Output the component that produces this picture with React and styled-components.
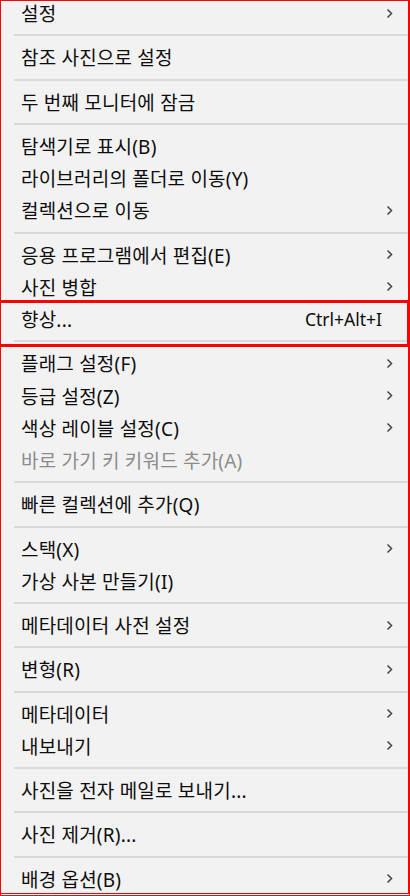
import React from 'react';
import styled, { createGlobalStyle } from 'styled-components';

const Global = createGlobalStyle`
  html, body { margin: 0; padding: 0; background: #ffffff; }
  body { font-family: "Noto Sans", "Noto Sans CJK KR", sans-serif; }
  #root { width: 410px; height: 896px; }
`;

const Frame = styled.div`
  box-sizing: border-box;
  width: 410px;
  height: 896px;
  overflow: hidden;
  background: #f2f2f2;
  background-clip: padding-box;
  border-left: 1px solid #ff0000;
  border-top: 1px solid #ff0000;
  border-right: 2px solid #ff0000;
  border-bottom: 3px double #ff0000;
`;

const List = styled.div`
  display: flex;
  flex-direction: column;
  margin-top: -4px;
`;

const Row = styled.div`
  display: flex;
  align-items: center;
  height: 32.25px;
  flex: 0 0 auto;
  padding-left: 20px;
  font-size: 19px;
  color: ${(p) => (p.$disabled ? '#8c8c8c' : '#0d0d0d')};
  white-space: nowrap;
`;

const Label = styled.span`
  flex: 1 1 auto;
  letter-spacing: 0.2px;
`;

const Shortcut = styled.span`
  flex: 0 0 auto;
  font-family: "Noto Sans", sans-serif;
  font-size: 17.5px;
`;

const ArrowCell = styled.span`
  flex: 0 0 26px;
  display: flex;
  align-items: center;
  padding-left: 4px;
  box-sizing: border-box;
`;

const Separator = styled.div`
  flex: 0 0 12px;
  display: flex;
  align-items: center;
  padding-left: 13px;
  &::before {
    content: '';
    display: block;
    flex: 1;
    height: 2px;
    background: #dadada;
  }
`;

const Highlight = styled.div`
  position: relative;
  display: flex;
  flex-direction: column;
  &::after {
    content: '';
    position: absolute;
    top: -3px;
    bottom: 0;
    left: -1px;
    right: -2px;
    border: 3px solid #ff0000;
    border-left-width: 1px;
    pointer-events: none;
  }
`;

const Chevron = () => (
  <svg width="7" height="11" viewBox="0 0 7 11">
    <path d="M1.5 1.5 L5.5 5.5 L1.5 9.5" fill="none" stroke="#4a4a4a" strokeWidth="1.6" />
  </svg>
);

const items = [
  { label: '설정', sub: true },
  'sep',
  { label: '참조 사진으로 설정' },
  'sep',
  { label: '두 번째 모니터에 잠금' },
  'sep',
  { label: '탐색기로 표시(B)' },
  { label: '라이브러리의 폴더로 이동(Y)' },
  { label: '컬렉션으로 이동', sub: true },
  'sep',
  { label: '응용 프로그램에서 편집(E)', sub: true },
  { label: '사진 병합', sub: true },
  { label: '향상...', shortcut: 'Ctrl+Alt+I', highlight: true },
  { label: '플래그 설정(F)', sub: true },
  { label: '등급 설정(Z)', sub: true },
  { label: '색상 레이블 설정(C)', sub: true },
  { label: '바로 가기 키 키워드 추가(A)', disabled: true },
  'sep',
  { label: '빠른 컬렉션에 추가(Q)' },
  'sep',
  { label: '스택(X)', sub: true },
  { label: '가상 사본 만들기(I)' },
  'sep',
  { label: '메타데이터 사전 설정', sub: true },
  'sep',
  { label: '변형(R)', sub: true },
  'sep',
  { label: '메타데이터', sub: true },
  { label: '내보내기', sub: true },
  'sep',
  { label: '사진을 전자 메일로 보내기...' },
  'sep',
  { label: '사진 제거(R)...' },
  'sep',
  { label: '배경 옵션(B)', sub: true },
];

const MenuRow = ({ item }) => (
  <Row $disabled={item.disabled}>
    <Label>{item.label}</Label>
    {item.shortcut && <Shortcut>{item.shortcut}</Shortcut>}
    <ArrowCell>{item.sub && <Chevron />}</ArrowCell>
  </Row>
);

export default function App() {
  return (
    <>
      <Global />
      <Frame>
        <List>
          {items.map((item, i) => {
            if (item === 'sep') return <Separator key={i} />;
            if (item.highlight)
              return (
                <Highlight key={i}>
                  <MenuRow item={item} />
                  <Separator />
                </Highlight>
              );
            return <MenuRow key={i} item={item} />;
          })}
        </List>
      </Frame>
    </>
  );
}
